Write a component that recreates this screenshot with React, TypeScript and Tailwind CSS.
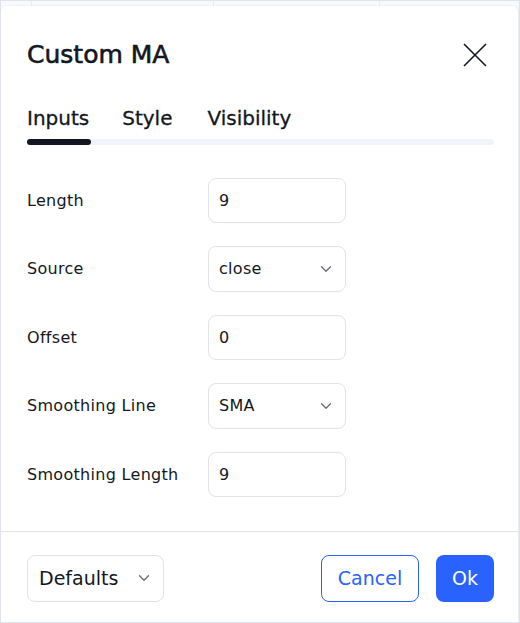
import { ChevronDown } from "lucide-react";

const font = { fontFamily: '"DejaVu Sans", sans-serif' };

function TextField({ value }: { value: string }) {
	return (
		<div className="w-[138px] h-[45px] rounded-[8px] border border-[#e0e3eb] bg-white flex items-center px-[10px] text-[16px] text-[#131722]">
			{value}
		</div>
	);
}

function SelectField({ value }: { value: string }) {
	return (
		<div className="w-[138px] h-[46px] rounded-[8px] border border-[#e0e3eb] bg-white flex items-center justify-between pl-[10px] pr-[10px] text-[16px] text-[#131722]">
			<span>{value}</span>
			<ChevronDown size={18} strokeWidth={1.75} className="text-[#6a6d78]" />
		</div>
	);
}

const rows: { label: string; value: string; select?: boolean }[] = [
	{ label: "Length", value: "9" },
	{ label: "Source", value: "close", select: true },
	{ label: "Offset", value: "0" },
	{ label: "Smoothing Line", value: "SMA", select: true },
	{ label: "Smoothing Length", value: "9" },
];

export default function App() {
	return (
		<div style={font} className="w-[520px] h-[623px] border border-[#e0e3eb] bg-[#f8f9fd] flex flex-col overflow-hidden">
			{/* table behind the dialog */}
			<div className="h-[5px] flex shrink-0">
				<div className="w-[31px] border-r border-[#e9ecf2]" />
				<div className="w-[182px] border-r border-[#e9ecf2]" />
				<div className="w-[166px] border-r border-[#e9ecf2]" />
				<div className="flex-1" />
			</div>

			<div className="flex-1 bg-white rounded-t-[6px] mr-[1px] shadow-[1px_0_2px_rgba(0,0,0,0.08)] flex flex-col">
				<div className="flex items-center justify-between pl-[26px] pr-[31px] pt-[31px]">
					<h1 className="text-[25px] font-medium text-[#131722] leading-[36px] [-webkit-text-stroke:0.6px_#131722]">
						Custom MA
					</h1>
					<svg width="24" height="24" viewBox="0 0 24 24" className="text-[#131722]">
						<path d="M1 1L23 23M23 1L1 23" stroke="currentColor" strokeWidth="1.6" fill="none" />
					</svg>
				</div>

				<div className="px-[26px] pt-[31px]">
					<div className="flex text-[20px] text-[#131722] leading-[28px] [-webkit-text-stroke:0.3px_#131722]">
						<span>Inputs</span>
						<span className="ml-[33px]">Style</span>
						<span className="ml-[35px]">Visibility</span>
					</div>
					<div className="mt-[7px] h-[6px] rounded-full bg-[#f0f3fa] mr-[-2px]">
						<div className="w-[64px] h-[6px] rounded-full bg-[#131722]" />
					</div>
				</div>

				<div className="px-[26px] pt-[33px] flex flex-col gap-[23px] text-[16px] tracking-[0.3px] text-[#131722]">
					{rows.map((r) => (
						<div key={r.label} className="flex items-center">
							<div className="w-[181px]">{r.label}</div>
							{r.select ? <SelectField value={r.value} /> : <TextField value={r.value} />}
						</div>
					))}
				</div>

				<div className="mt-auto border-t border-[#e0e3eb] h-[91px] flex items-center justify-between pl-[26px] pr-[24px] pt-[2px]">
					<div className="w-[137px] h-[47px] rounded-[8px] border border-[#e0e3eb] flex items-center justify-between pl-[11px] pr-[10px] text-[19px] text-[#131722]">
						<span>Defaults</span>
						<ChevronDown size={18} strokeWidth={1.75} className="text-[#6a6d78]" />
					</div>
					<div className="flex gap-[17px]">
						<button className="w-[98px] h-[47px] rounded-[8px] border border-[#2962ff] text-[#2962ff] text-[19px] bg-white">
							Cancel
						</button>
						<button className="w-[58px] h-[47px] rounded-[8px] bg-[#2962ff] text-white text-[19px]">
							Ok
						</button>
					</div>
				</div>
			</div>
		</div>
	);
}
